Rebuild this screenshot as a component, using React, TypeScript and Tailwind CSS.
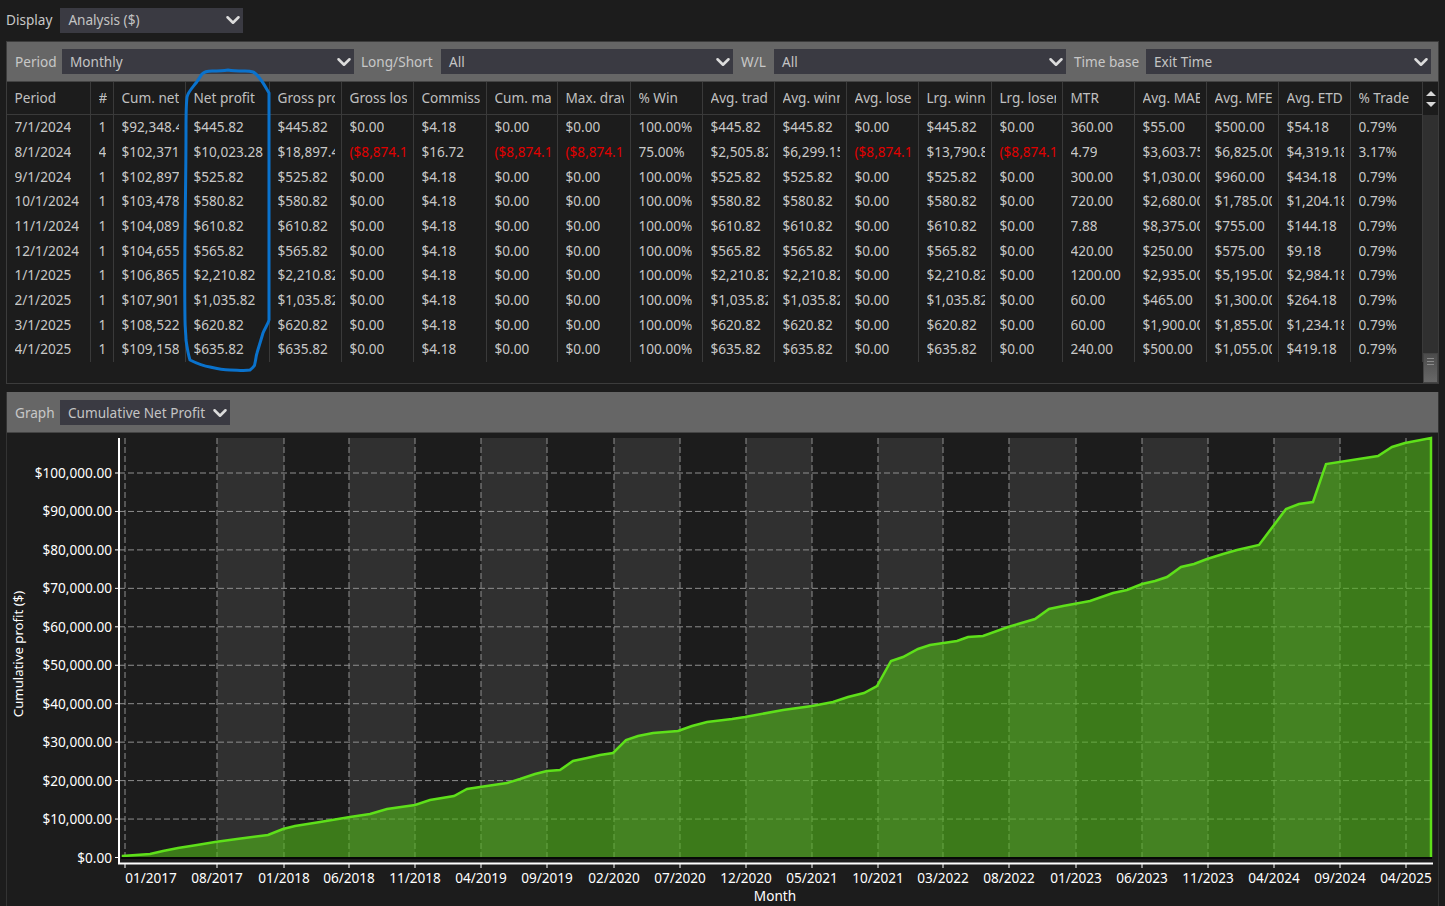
import { ChevronDown } from 'lucide-react';

const gridCols = 'grid grid-cols-[84px_23px_72px_84px_72px_72px_73px_71px_73px_72px_72px_72px_72px_73px_71px_72px_72px_72px_72px_72px]';

const headers = ['Period', '#', 'Cum. net profit', 'Net profit', 'Gross profit', 'Gross loss', 'Commission', 'Cum. max', 'Max. drawdown', '% Win', 'Avg. trade', 'Avg. winner', 'Avg. loser', 'Lrg. winner', 'Lrg. loser', 'MTR', 'Avg. MAE', 'Avg. MFE', 'Avg. ETD', '% Trade'];

const row = (period: string, cum: string, net: string, mtr: string, mae: string, mfe: string, etd: string) => [
    period, '1', cum, net, net, '$0.00', '$4.18', '$0.00', '$0.00', '100.00%', net, net, '$0.00', net, '$0.00', mtr, mae, mfe, etd, '0.79%',
];

const rows = [
    row('7/1/2024', '$92,348.47', '$445.82', '360.00', '$55.00', '$500.00', '$54.18'),
    ['8/1/2024', '4', '$102,371.75', '$10,023.28', '$18,897.46', '($8,874.18)', '$16.72', '($8,874.18)', '($8,874.18)', '75.00%', '$2,505.82', '$6,299.15', '($8,874.18)', '$13,790.82', '($8,874.18)', '4.79', '$3,603.75', '$6,825.00', '$4,319.18', '3.17%'],
    row('9/1/2024', '$102,897.57', '$525.82', '300.00', '$1,030.00', '$960.00', '$434.18'),
    row('10/1/2024', '$103,478.39', '$580.82', '720.00', '$2,680.00', '$1,785.00', '$1,204.18'),
    row('11/1/2024', '$104,089.21', '$610.82', '7.88', '$8,375.00', '$755.00', '$144.18'),
    row('12/1/2024', '$104,655.03', '$565.82', '420.00', '$250.00', '$575.00', '$9.18'),
    row('1/1/2025', '$106,865.85', '$2,210.82', '1200.00', '$2,935.00', '$5,195.00', '$2,984.18'),
    row('2/1/2025', '$107,901.67', '$1,035.82', '60.00', '$465.00', '$1,300.00', '$264.18'),
    row('3/1/2025', '$108,522.49', '$620.82', '60.00', '$1,900.00', '$1,855.00', '$1,234.18'),
    row('4/1/2025', '$109,158.31', '$635.82', '240.00', '$500.00', '$1,055.00', '$419.18'),
];

function Select({ value, className }: { value: string; className: string }) {
    return (
        <div className={`h-[25px] bg-[#3a3a42] flex items-center justify-between pl-2 text-[#c4c4c4] ${className}`}>
            <span className="whitespace-nowrap">{value}</span>
            <ChevronDown size={22} strokeWidth={2.8} className="text-[#dcdcdc] shrink-0 -mr-px" />
        </div>
    );
}

function Label({ children, className = '' }: { children: string; className?: string }) {
    return <span className={`text-[#c8c8c8] whitespace-nowrap ${className}`}>{children}</span>;
}

const curve = [
    [123, 856], [150, 854], [163, 851], [178, 848], [197, 845], [215, 842], [237, 839], [268, 835], [283, 829], [295, 826],
    [320, 822], [350, 817], [370, 814], [387, 809], [415, 805], [430, 800], [454, 796], [467, 789], [480, 787], [507, 783],
    [520, 779], [535, 774], [547, 771], [560, 770], [573, 761], [587, 758], [600, 755], [613, 753], [626, 740], [638, 736],
    [653, 733], [678, 731], [692, 726], [707, 722], [732, 719], [745, 717], [783, 710], [812, 706], [833, 702], [848, 697],
    [864, 693], [877, 686], [891, 661], [903, 657], [918, 649], [930, 645], [957, 641], [968, 637], [983, 636], [1008, 627],
    [1035, 619], [1049, 609], [1063, 606], [1090, 601], [1113, 593], [1127, 590], [1142, 584], [1155, 581], [1167, 577],
    [1181, 567], [1194, 564], [1207, 559], [1223, 554], [1237, 550], [1259, 545], [1286, 509], [1299, 504], [1313, 502],
    [1326, 464], [1378, 456], [1392, 447], [1405, 443], [1431, 438],
];

const xTicks = [
    [125, '01/2017'], [217, '08/2017'], [284, '01/2018'], [349, '06/2018'], [415, '11/2018'], [481, '04/2019'], [547, '09/2019'],
    [614, '02/2020'], [680, '07/2020'], [746, '12/2020'], [812, '05/2021'], [878, '10/2021'], [943, '03/2022'], [1009, '08/2022'],
    [1076, '01/2023'], [1142, '06/2023'], [1208, '11/2023'], [1274, '04/2024'], [1340, '09/2024'], [1406, '04/2025'],
] as [number, string][];

const yTicks = ['$0.00', '$10,000.00', '$20,000.00', '$30,000.00', '$40,000.00', '$50,000.00', '$60,000.00', '$70,000.00', '$80,000.00', '$90,000.00', '$100,000.00'];

function Chart() {
    const line = curve.map((p) => p.join(',')).join(' ');
    return (
        <svg viewBox="7 433 1431 473" className="block w-[1431px] h-[473px]">
            {xTicks.slice(1).map(([x], i) =>
                i % 2 === 0 && i < 18 ? <rect key={x} x={x} y={438} width={xTicks[i + 2][0] - x} height={419} fill="#303030" /> : null
            )}
            {xTicks.map(([x]) => (
                <line key={x} x1={x} x2={x} y1={438} y2={857} stroke="#8e8e8e" strokeDasharray="6 3" />
            ))}
            {yTicks.slice(1).map((t, i) => {
                const y = 857.5 - (i + 1) * 38.45;
                return <line key={t} x1={119} x2={1432} y1={y} y2={y} stroke="#8e8e8e" strokeDasharray="6 3" />;
            })}
            <polygon points={`${line} 1431,857 123,857`} fill="#51b41a" fillOpacity={0.62} />
            <polyline points={`123,857 ${line} 1431,857`} fill="none" stroke="#5ee01a" strokeWidth={2.5} />
            <line x1={121} x2={1432} y1={858} y2={858} stroke="#000" strokeWidth={1.5} />
            <path d="M119 438V863.5H1433" fill="none" stroke="#fff" strokeWidth={2} />
            {yTicks.map((t, i) => {
                const y = 857.5 - i * 38.45;
                return (
                    <g key={t}>
                        <line x1={115} x2={119} y1={y} y2={y} stroke="#fff" />
                        <text x={112} y={y + 5} textAnchor="end" fill="#fff" fontSize={13.6}>{t}</text>
                    </g>
                );
            })}
            {xTicks.map(([x, t], i) => (
                <g key={t}>
                    <line x1={x} x2={x} y1={864} y2={868} stroke="#fff" />
                    <text x={i === 0 ? 151 : x} y={883} textAnchor="middle" fill="#fff" fontSize={13.6}>{t}</text>
                </g>
            ))}
            <text x={775} y={901} textAnchor="middle" fill="#fff" fontSize={13.6}>Month</text>
            <text x={0} y={0} transform="translate(23 654) rotate(-90)" textAnchor="middle" fill="#fff" fontSize={13.2}>Cumulative profit ($)</text>
        </svg>
    );
}

export default function App() {
    return (
        <div className="relative w-[1445px] h-[906px] overflow-hidden bg-[#1c1c1c] font-['Noto_Sans',sans-serif] text-[13.6px] leading-none">
            <div className="h-[41px] flex items-center gap-[7px] pl-[6px] pb-px">
                <Label>Display</Label>
                <Select value="Analysis ($)" className="w-[183px] ml-[1px]" />
            </div>

            <div className="mx-[6px] h-[343px] border border-[#3c3c3c] flex flex-col">
                <div className="h-[40px] bg-[#666666] flex items-center pl-2 border-b border-[#444444]">
                    <Label className="w-[47px]">Period</Label>
                    <Select value="Monthly" className="w-[292px]" />
                    <Label className="w-[80px] ml-[7px]">Long/Short</Label>
                    <Select value="All" className="w-[292px]" />
                    <Label className="w-[33px] ml-2">W/L</Label>
                    <Select value="All" className="w-[292px]" />
                    <Label className="w-[72px] ml-2">Time base</Label>
                    <Select value="Exit Time" className="w-[285px]" />
                </div>
                <div className="flex-1 flex min-h-0">
                    <div className="w-[1416px]">
                        <div className={`${gridCols} h-[32.7px] border-b border-[#3a3a3a]`}>
                            {headers.map((h) => (
                                <div key={h} className="border-r border-[#3a3a3a] pl-[7.5px] pr-[6px] flex items-center">
                                    <div className="overflow-hidden whitespace-nowrap text-[#c0c0c0] py-1">{h}</div>
                                </div>
                            ))}
                        </div>
                        {rows.map((r) => (
                            <div key={r[0]} className={`${gridCols} h-[24.7px]`}>
                                {r.map((v, i) => (
                                    <div key={i} className="border-r border-[#3a3a3a] pl-[7.5px] pr-[6px] flex items-center">
                                        <div className={`overflow-hidden whitespace-nowrap py-1 ${v.startsWith('(') ? 'text-[#e00000]' : 'text-[#c8c8c8]'}`}>{v}</div>
                                    </div>
                                ))}
                            </div>
                        ))}
                    </div>
                    <div className="w-4 flex flex-col bg-[#303030]">
                        <div className="h-[33px] bg-[#1c1c1c] flex flex-col items-center justify-center gap-[6px]">
                            <div className="w-0 h-0 border-x-[5px] border-x-transparent border-b-[5px] border-b-[#d8d8d8]" />
                            <div className="w-0 h-0 border-x-[5px] border-x-transparent border-t-[5px] border-t-[#d8d8d8]" />
                        </div>
                        <div className="mt-auto h-[30px] bg-gradient-to-b from-[#4c4c4c] to-[#686868] flex flex-col gap-[2px] px-[3px] pt-[4px] border border-[#444444]">
                            <div className="h-px bg-[#8a8a8a]" />
                            <div className="h-px bg-[#8a8a8a]" />
                            <div className="h-px bg-[#8a8a8a]" />
                        </div>
                    </div>
                </div>
            </div>

            <div className="mx-[6px] mt-2 border-x border-[#333333]">
                <div className="h-[41px] bg-[#666666] flex items-center pl-2 pt-px border-b border-[#444444]">
                    <Label className="w-[45px]">Graph</Label>
                    <Select value="Cumulative Net Profit" className="w-[170px]" />
                </div>
                <Chart />
            </div>

            {/* hand drawn highlight round the net profit column */}
            <svg viewBox="0 0 1445 906" className="absolute inset-0 w-[1445px] h-[906px] pointer-events-none">
                <path
                    d="M228 70C222 71 216 71 212 71C207 71 204 72 202 74C200 77 198 80 196 83C192 88 188 92 187 97C186 105 186 118 186 130C186 190 184 260 185 320C185 328 186 335 186 340C187 347 188 354 190 360C196 363 203 366 210 367C218 369 224 370 230 370C237 370 244 371 250 370C253 368 255 366 255 363C256 359 256 356 257 353C259 346 261 340 263 333C265 328 268 324 269 320V93C266 88 264 84 261 80C258 76 256 73 253 72C250 71 248 71 245 71C239 71 233 71 228 70Z"
                    fill="none"
                    stroke="#0a72cc"
                    strokeWidth={3}
                />
            </svg>
        </div>
    );
}
